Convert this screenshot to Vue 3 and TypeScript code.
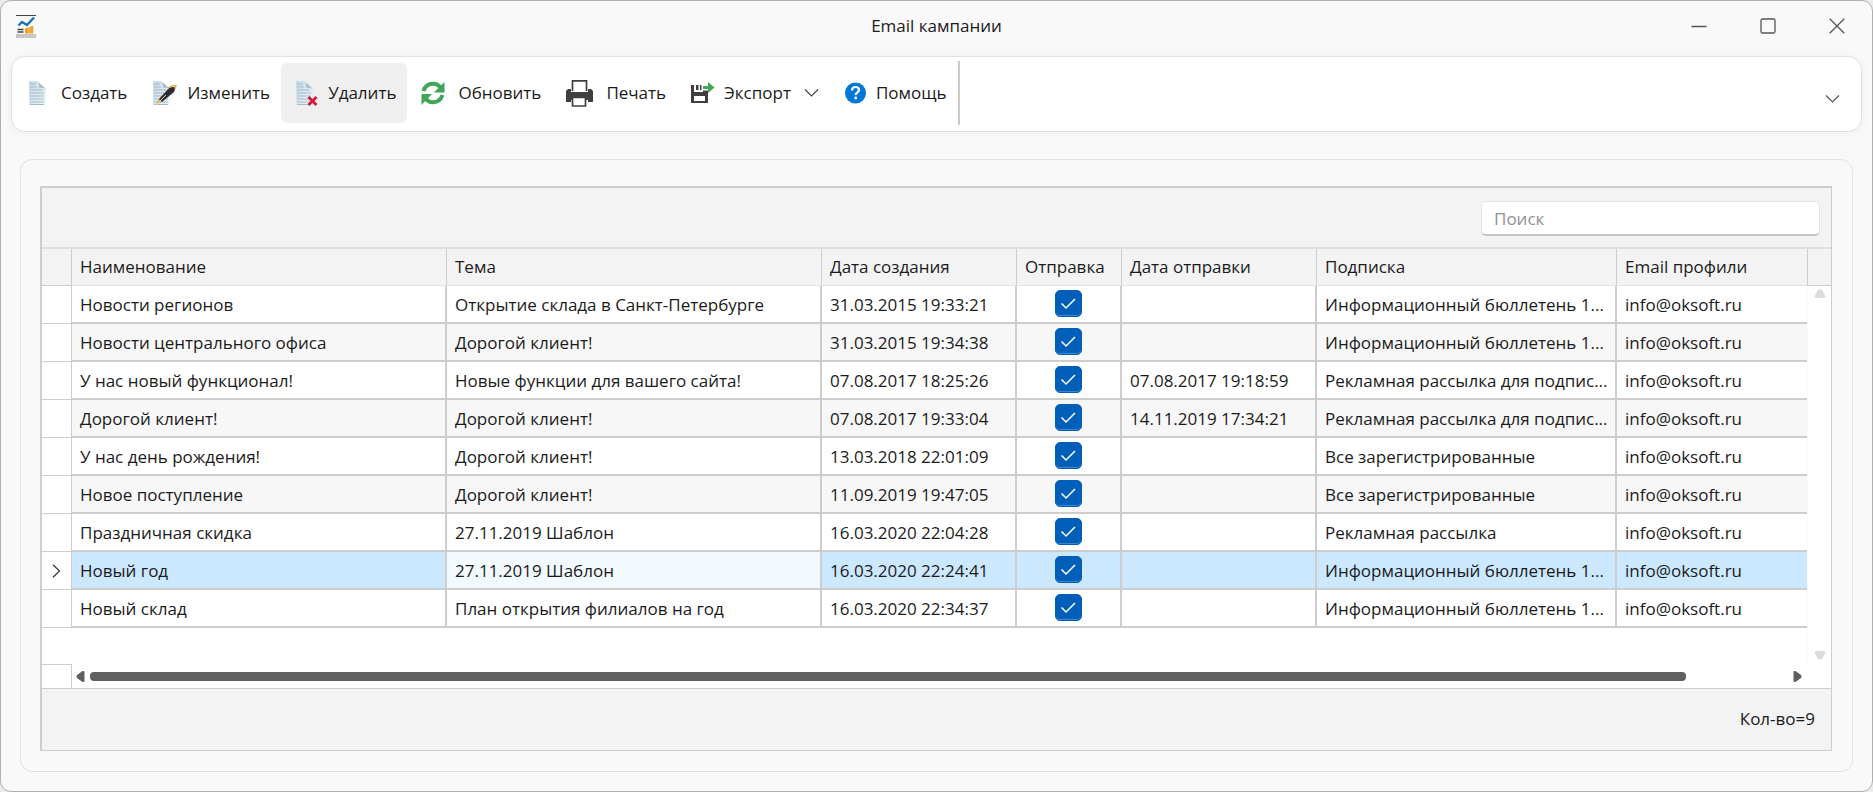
<script setup lang="ts">
import { ref } from 'vue'

interface Campaign {
  name: string
  subject: string
  created: string
  send: boolean
  sent: string
  list: string
  profile: string
}

const mail = 'info@oksoft.ru'
const bulletin = 'Информационный бюллетень 1...'
const adList = 'Рекламная рассылка для подпис...'
const allList = 'Все зарегистрированные'

const rows = ref<Campaign[]>([
  { name: 'Новости регионов', subject: 'Открытие склада в Санкт-Петербурге', created: '31.03.2015 19:33:21', send: true, sent: '', list: bulletin, profile: mail },
  { name: 'Новости центрального офиса', subject: 'Дорогой клиент!', created: '31.03.2015 19:34:38', send: true, sent: '', list: bulletin, profile: mail },
  { name: 'У нас новый функционал!', subject: 'Новые функции для вашего сайта!', created: '07.08.2017 18:25:26', send: true, sent: '07.08.2017 19:18:59', list: adList, profile: mail },
  { name: 'Дорогой клиент!', subject: 'Дорогой клиент!', created: '07.08.2017 19:33:04', send: true, sent: '14.11.2019 17:34:21', list: adList, profile: mail },
  { name: 'У нас день рождения!', subject: 'Дорогой клиент!', created: '13.03.2018 22:01:09', send: true, sent: '', list: allList, profile: mail },
  { name: 'Новое поступление', subject: 'Дорогой клиент!', created: '11.09.2019 19:47:05', send: true, sent: '', list: allList, profile: mail },
  { name: 'Праздничная скидка', subject: '27.11.2019 Шаблон', created: '16.03.2020 22:04:28', send: true, sent: '', list: 'Рекламная рассылка', profile: mail },
  { name: 'Новый год', subject: '27.11.2019 Шаблон', created: '16.03.2020 22:24:41', send: true, sent: '', list: bulletin, profile: mail },
  { name: 'Новый склад', subject: 'План открытия филиалов на год', created: '16.03.2020 22:34:37', send: true, sent: '', list: bulletin, profile: mail },
])

const headers = ['Наименование', 'Тема', 'Дата создания', 'Отправка', 'Дата отправки', 'Подписка', 'Email профили']
const selected = ref(7)
const query = ref('')
</script>

<template>
  <div class="window">
    <header class="titlebar">
      <svg class="app-icon" width="20" height="23" viewBox="0 0 20 23" aria-hidden="true">
        <rect width="20" height="1" fill="#444" />
        <path d="M2.500 10.500 6 7l5 3 7-7.500" fill="none" stroke="#1c72b0" stroke-width="2.400" />
        <path d="M1.500 14.500h6M1.500 17h6" stroke="#444" stroke-width="1.300" />
        <path d="M9 13.500l3-1v6H9zM12.300 12.500l1.500-.5v6.500h-1.500zM14.200 11.500l3-.5v7.500h-3z" fill="#eea020" />
        <rect y="19" width="20" height="4" fill="#c6c6c6" />
      </svg>
      <h1>Email кампании</h1>
      <div class="controls">
        <button type="button" aria-label="Свернуть">
          <svg width="16" height="16" viewBox="0 0 16 16"><path d="M.5 8.500h15" stroke="#555" stroke-width="1.500" /></svg>
        </button>
        <button type="button" aria-label="Развернуть">
          <svg width="16" height="16" viewBox="0 0 16 16"><rect x="1" y="1" width="14" height="14" rx="1.500" fill="none" stroke="#555" stroke-width="1.300" /></svg>
        </button>
        <button type="button" aria-label="Закрыть">
          <svg width="16" height="16" viewBox="0 0 16 16"><path d="M.7.700l14.600 14.600M15.300.7.700 15.300" stroke="#555" stroke-width="1.300" /></svg>
        </button>
      </div>
    </header>

    <svg width="0" height="0" class="defs" aria-hidden="true">
      <defs>
        <linearGradient id="paper" x1="0" y1="0" x2="1" y2="1">
          <stop offset="0" stop-color="#c3dae6" />
          <stop offset="1" stop-color="#f0f7fa" />
        </linearGradient>
        <symbol id="doc" viewBox="0 0 24 26">
          <path d="M1 1h8l9 8v16H1z" fill="url(#paper)" />
          <path d="M9 1l9 8c-3-1.500-5-1.500-7-1C11.500 5 11 3 9 1z" fill="#a3bccb" />
          <path d="M2 4h6M2 7h7M2 10h13M2 13h14M2 16h14M2 19h14M2 22h14M2 24.500h14" stroke="#a5b9c6" />
        </symbol>
      </defs>
    </svg>

    <nav class="toolbar">
      <button type="button" class="tool">
        <svg width="24" height="26"><use href="#doc" width="24" height="26" /></svg>
        <span>Создать</span>
      </button>
      <button type="button" class="tool">
        <svg width="26" height="26">
          <use href="#doc" width="24" height="26" />
          <path d="M4 25l3-6.500 3 2.500z" fill="#cba944" />
          <path d="M7 19L17.500 7.500l6.500-1-2 5.500L10 22z" fill="#2e2c35" />
          <path d="M16 8l5-2.500 3 .500-1.500 2.500" fill="none" stroke="#d9b84f" stroke-width="1.500" />
          <path d="M4 25l10-10" stroke="#f0d98a" />
        </svg>
        <span>Изменить</span>
      </button>
      <button type="button" class="tool active">
        <svg width="24" height="26">
          <use href="#doc" width="24" height="26" />
          <path d="M13.500 17l8 8M21.500 17l-8 8" stroke="#d3183c" stroke-width="2.800" />
        </svg>
        <span>Удалить</span>
      </button>
      <button type="button" class="tool">
        <svg class="spaced" width="24" height="24" viewBox="0 0 24 24">
          <path d="M2.500 10C4 5.200 8 2.800 12 2.800c3.500 0 6 1.500 7.500 4" fill="none" stroke="#41a558" stroke-width="4" />
          <path d="M23.500 1v10.500h-10.500z" fill="#41a558" />
          <path d="M21.500 14c-1.500 4.800-5.500 7.200-9.500 7.200-3.500 0-6-1.500-7.500-4" fill="none" stroke="#41a558" stroke-width="4" />
          <path d="M.5 24V13h10.500z" fill="#41a558" />
        </svg>
        <span>Обновить</span>
      </button>
      <button type="button" class="tool">
        <svg class="spaced" width="27" height="28" viewBox="0 0 27 28">
          <path d="M2 10h3v4h17v-4h3l2 2v11h-5v-4H5v4H0V12z" fill="#3f3f3f" />
          <path d="M6.500 12V1.800h14V12" fill="#fff" stroke="#3f3f3f" stroke-width="1.700" />
          <path d="M0 13h27v8H0z" fill="#3f3f3f" />
          <path d="M6.500 18.500h13v8.500h-13z" fill="#fff" stroke="#3f3f3f" stroke-width="1.700" />
        </svg>
        <span>Печать</span>
      </button>
      <button type="button" class="tool">
        <svg width="24" height="24" viewBox="0 0 24 24">
          <path d="M0 4h3v7h9V9.500h5V22H0z" fill="#3f3f3f" />
          <path d="M5 4h2.500v5H5zM9 4h1.500v5H9z" fill="#3f3f3f" />
          <path d="M3 15h11v5H3z" fill="#fff" />
          <path d="M12 5h5V1l6.500 5.500L17 12V8h-5z" fill="#41a558" />
        </svg>
        <span>Экспорт</span>
        <svg class="caret" width="15" height="10" viewBox="0 0 15 10"><path d="M1 1.500l6.500 6.500L14 1.500" fill="none" stroke="#444" stroke-width="1.200" /></svg>
      </button>
      <button type="button" class="tool">
        <svg width="23" height="24" viewBox="0 0 23 24">
          <circle cx="11.500" cy="12" r="10.500" fill="#0078d7" />
          <path d="M8 9.500C8 7.500 9.500 6 11.500 6S15 7.300 15 9c0 2.500-3.300 2.500-3.300 5" fill="none" stroke="#fff" stroke-width="2.200" />
          <circle cx="11.700" cy="17" r="1.400" fill="#fff" />
        </svg>
        <span>Помощь</span>
      </button>
      <span class="divider"></span>
      <button type="button" class="collapse" aria-label="Свернуть панель">
        <svg width="15" height="10" viewBox="0 0 15 10"><path d="M1 1.500l6.500 6.500L14 1.500" fill="none" stroke="#555" stroke-width="1.200" /></svg>
      </button>
    </nav>

    <main class="panel">
      <section class="grid">
        <div class="search">
          <input v-model="query" type="text" placeholder="Поиск" aria-label="Поиск" />
        </div>

        <div class="body">
          <div class="sheet">
            <table>
              <colgroup>
                <col class="c-mark" /><col class="c-wide" /><col class="c-wide" /><col class="c-date" />
                <col class="c-send" /><col class="c-date" /><col class="c-list" /><col class="c-mail" />
              </colgroup>
              <thead>
                <tr>
                  <th class="mark"></th>
                  <th v-for="h in headers" :key="h" scope="col">{{ h }}</th>
                </tr>
              </thead>
              <tbody>
                <tr v-for="(row, i) in rows" :key="i" :class="{ selected: i === selected }" @click="selected = i">
                  <td class="mark">
                    <svg v-if="i === selected" width="9" height="14" viewBox="0 0 9 14"><path d="M1 .800l6.500 6.200L1 13.200" fill="none" stroke="#333" stroke-width="1.200" /></svg>
                  </td>
                  <td>{{ row.name }}</td>
                  <td class="focus">{{ row.subject }}</td>
                  <td>{{ row.created }}</td>
                  <td class="send">
                    <label class="tick">
                      <input v-model="row.send" type="checkbox" :aria-label="`Отправка: ${row.name}`" />
                      <svg width="27" height="27" viewBox="0 0 27 27"><path d="M6.500 13.500l4.500 4.500L20 9" fill="none" stroke="#fff" stroke-width="1.500" /></svg>
                    </label>
                  </td>
                  <td>{{ row.sent }}</td>
                  <td>{{ row.list }}</td>
                  <td>{{ row.profile }}</td>
                </tr>
              </tbody>
            </table>
          </div>
          <div class="side">
            <div class="side-head"></div>
            <div class="vbar">
              <button type="button" aria-label="Вверх"><svg width="12" height="9" viewBox="0 0 12 9"><path d="M4.500 1h3L11 7.500l-.8 1H1.800L1 7.500z" fill="#dcdcdc" stroke="#dcdcdc" stroke-linejoin="round" /></svg></button>
              <button type="button" aria-label="Вниз"><svg width="12" height="9" viewBox="0 0 12 9"><path d="M4.500 8h3L11 1.500l-.8-1H1.800L1 1.500z" fill="#dcdcdc" stroke="#dcdcdc" stroke-linejoin="round" /></svg></button>
            </div>
          </div>
        </div>

        <div class="hrow">
          <div class="corner"></div>
          <div class="hbar">
            <button type="button" aria-label="Влево"><svg width="9" height="11" viewBox="0 0 9 11"><path d="M8 .500v10L6.500 10.500 1 6.500v-2L6.500.500z" fill="#606060" stroke="#606060" stroke-linejoin="round" /></svg></button>
            <div class="track"><div class="thumb"></div></div>
            <button type="button" aria-label="Вправо"><svg width="9" height="11" viewBox="0 0 9 11"><path d="M1 .500v10l1.500 0L8 6.500v-2L2.500.500z" fill="#606060" stroke="#606060" stroke-linejoin="round" /></svg></button>
          </div>
        </div>

        <footer class="summary">Кол-во={{ rows.length }}</footer>
      </section>
    </main>
  </div>
</template>

<style>
body {
  background: #ececec;
}
</style>

<style scoped>
.window,
.window * {
  box-sizing: border-box;
}

.window {
  display: flex;
  flex-direction: column;
  min-height: 100vh;
  border: 1px solid #b0b0b0;
  border-radius: 11px;
  background: #f9f9f9;
  color: #1b1b1b;
  font-family: "Open Sans", "Noto Sans", sans-serif;
  font-size: 17px;
  line-height: 24px;
}

button {
  padding: 0;
  border: 0;
  background: none;
  color: inherit;
  font: inherit;
}

svg {
  display: block;
  flex: none;
}

.defs {
  position: absolute;
}

.titlebar {
  display: grid;
  grid-template-columns: 1fr auto 1fr;
  align-items: center;
  height: 55px;
  padding: 0 15px 5px;
}

h1 {
  margin: 0;
  font-size: 17px;
  font-weight: 400;
}

.controls {
  display: flex;
  justify-content: flex-end;
  gap: 53px;
  padding-right: 12px;
}

.toolbar {
  display: flex;
  align-items: center;
  height: 76px;
  margin: 0 10px;
  padding: 0 21px 2px 2px;
  border: 1px solid #e0e0e0;
  border-radius: 14px;
  background: #fff;
  box-shadow: 0 1px 6px 2px rgba(0, 0, 0, 0.03);
}

.tool {
  display: flex;
  align-items: center;
  gap: 9px;
  height: 60px;
  padding: 0 11px 0 14px;
  border-radius: 6px;
}

.active {
  background: #efefef;
}

.spaced {
  margin-right: 4px;
}

.caret {
  margin-left: 4px;
}

.divider {
  width: 2px;
  height: 64px;
  background: #c9c9c9;
}

.collapse {
  margin: 12px 0 0 auto;
}

.panel {
  display: flex;
  flex: 1;
  margin: 27px 19px 19px;
  padding: 26px 20px 20px 19px;
  border: 1px solid #e2e2e2;
  border-radius: 12px;
}

.grid {
  display: flex;
  flex: 1;
  flex-direction: column;
  min-width: 0;
  border: 1px solid #cdcdcd;
  border-width: 2px 1px 1px 2px;
  background: #f3f3f3;
}

.search {
  display: flex;
  justify-content: flex-end;
  height: 61px;
  padding: 13px 11px 0;
  border-bottom: 2px solid #e0e0e0;
}

.search input {
  width: 339px;
  height: 35px;
  padding: 0 12px;
  border: 1px solid #e4e4e4;
  border-bottom: 2px solid #c4c4c4;
  border-radius: 5px;
  background: #fff;
  color: inherit;
  font: inherit;
}

.search input::placeholder {
  color: #919191;
  opacity: 1;
}

.body {
  display: flex;
  flex: 1;
  background: #fff;
}

.sheet {
  flex: 1;
  min-width: 0;
}

table {
  width: 100%;
  table-layout: fixed;
  border-spacing: 0;
}

.c-mark { width: 30px; }
.c-wide { width: 375px; }
.c-date { width: 195px; }
.c-send { width: 105px; }
.c-list { width: 300px; }
.c-mail { width: 190px; }

th,
td {
  height: 38px;
  padding: 1px 0 0 8px;
  border-right: 2px solid #cdcdcd;
  border-bottom: 2px solid #cdcdcd;
  overflow: hidden;
  font-weight: 400;
  text-align: left;
  white-space: nowrap;
}

th {
  height: 37px;
  padding-top: 0;
  border-right-width: 1px;
  border-bottom: 1px solid #e4e4e4;
  background: #f3f3f3;
}

tr:nth-child(even) td {
  background: #f7f7f7;
}

tr.selected td {
  background: #cce8ff;
}

tr.selected .focus {
  background: #f2f9ff;
}

th:last-child,
td:last-child {
  border-right: 0;
}

.mark {
  padding: 0 0 0 10px;
  border-right-width: 1px;
  border-bottom: 1px solid #cdcdcd;
}

tr td.mark {
  background: #fff;
}

.send {
  padding: 0 0 2px;
}

.tick {
  display: grid;
  width: 27px;
  margin: 0 auto;
}

.tick input,
.tick svg {
  grid-area: 1 / 1;
}

.tick input {
  width: 27px;
  height: 27px;
  margin: 0;
  border: 1px solid #005fb8;
  border-radius: 5px;
  appearance: none;
  background: #fff;
}

.tick input:checked {
  background: #005fb8;
  box-shadow: inset 0 -1px 0 #3c85ca;
}

.tick svg {
  pointer-events: none;
}

.side {
  display: flex;
  flex-direction: column;
  width: 24px;
}

.side-head {
  height: 37px;
  border-bottom: 1px solid #cdcdcd;
  border-left: 1px solid #cdcdcd;
  background: #f3f3f3;
}

.vbar {
  display: flex;
  flex: 1;
  flex-direction: column;
  justify-content: space-between;
  align-items: center;
  padding: 3px 0 4px;
  border-left: 1px solid #fafafa;
}

.hrow {
  display: flex;
  height: 25px;
  padding-right: 24px;
  border-bottom: 1px solid #cdcdcd;
  background: #fff;
}

.corner {
  width: 30px;
  border-top: 1px solid #cdcdcd;
  border-right: 1px solid #cdcdcd;
}

.hbar {
  display: flex;
  flex: 1;
  align-items: center;
  gap: 5px;
  padding: 0 5px 0 4px;
}

.track {
  flex: 1;
}

.thumb {
  width: 94%;
  height: 9px;
  border-radius: 4px;
  background: #606060;
}

.summary {
  display: flex;
  align-items: center;
  justify-content: flex-end;
  height: 61px;
  padding: 0 16px 2px 0;
}
</style>
